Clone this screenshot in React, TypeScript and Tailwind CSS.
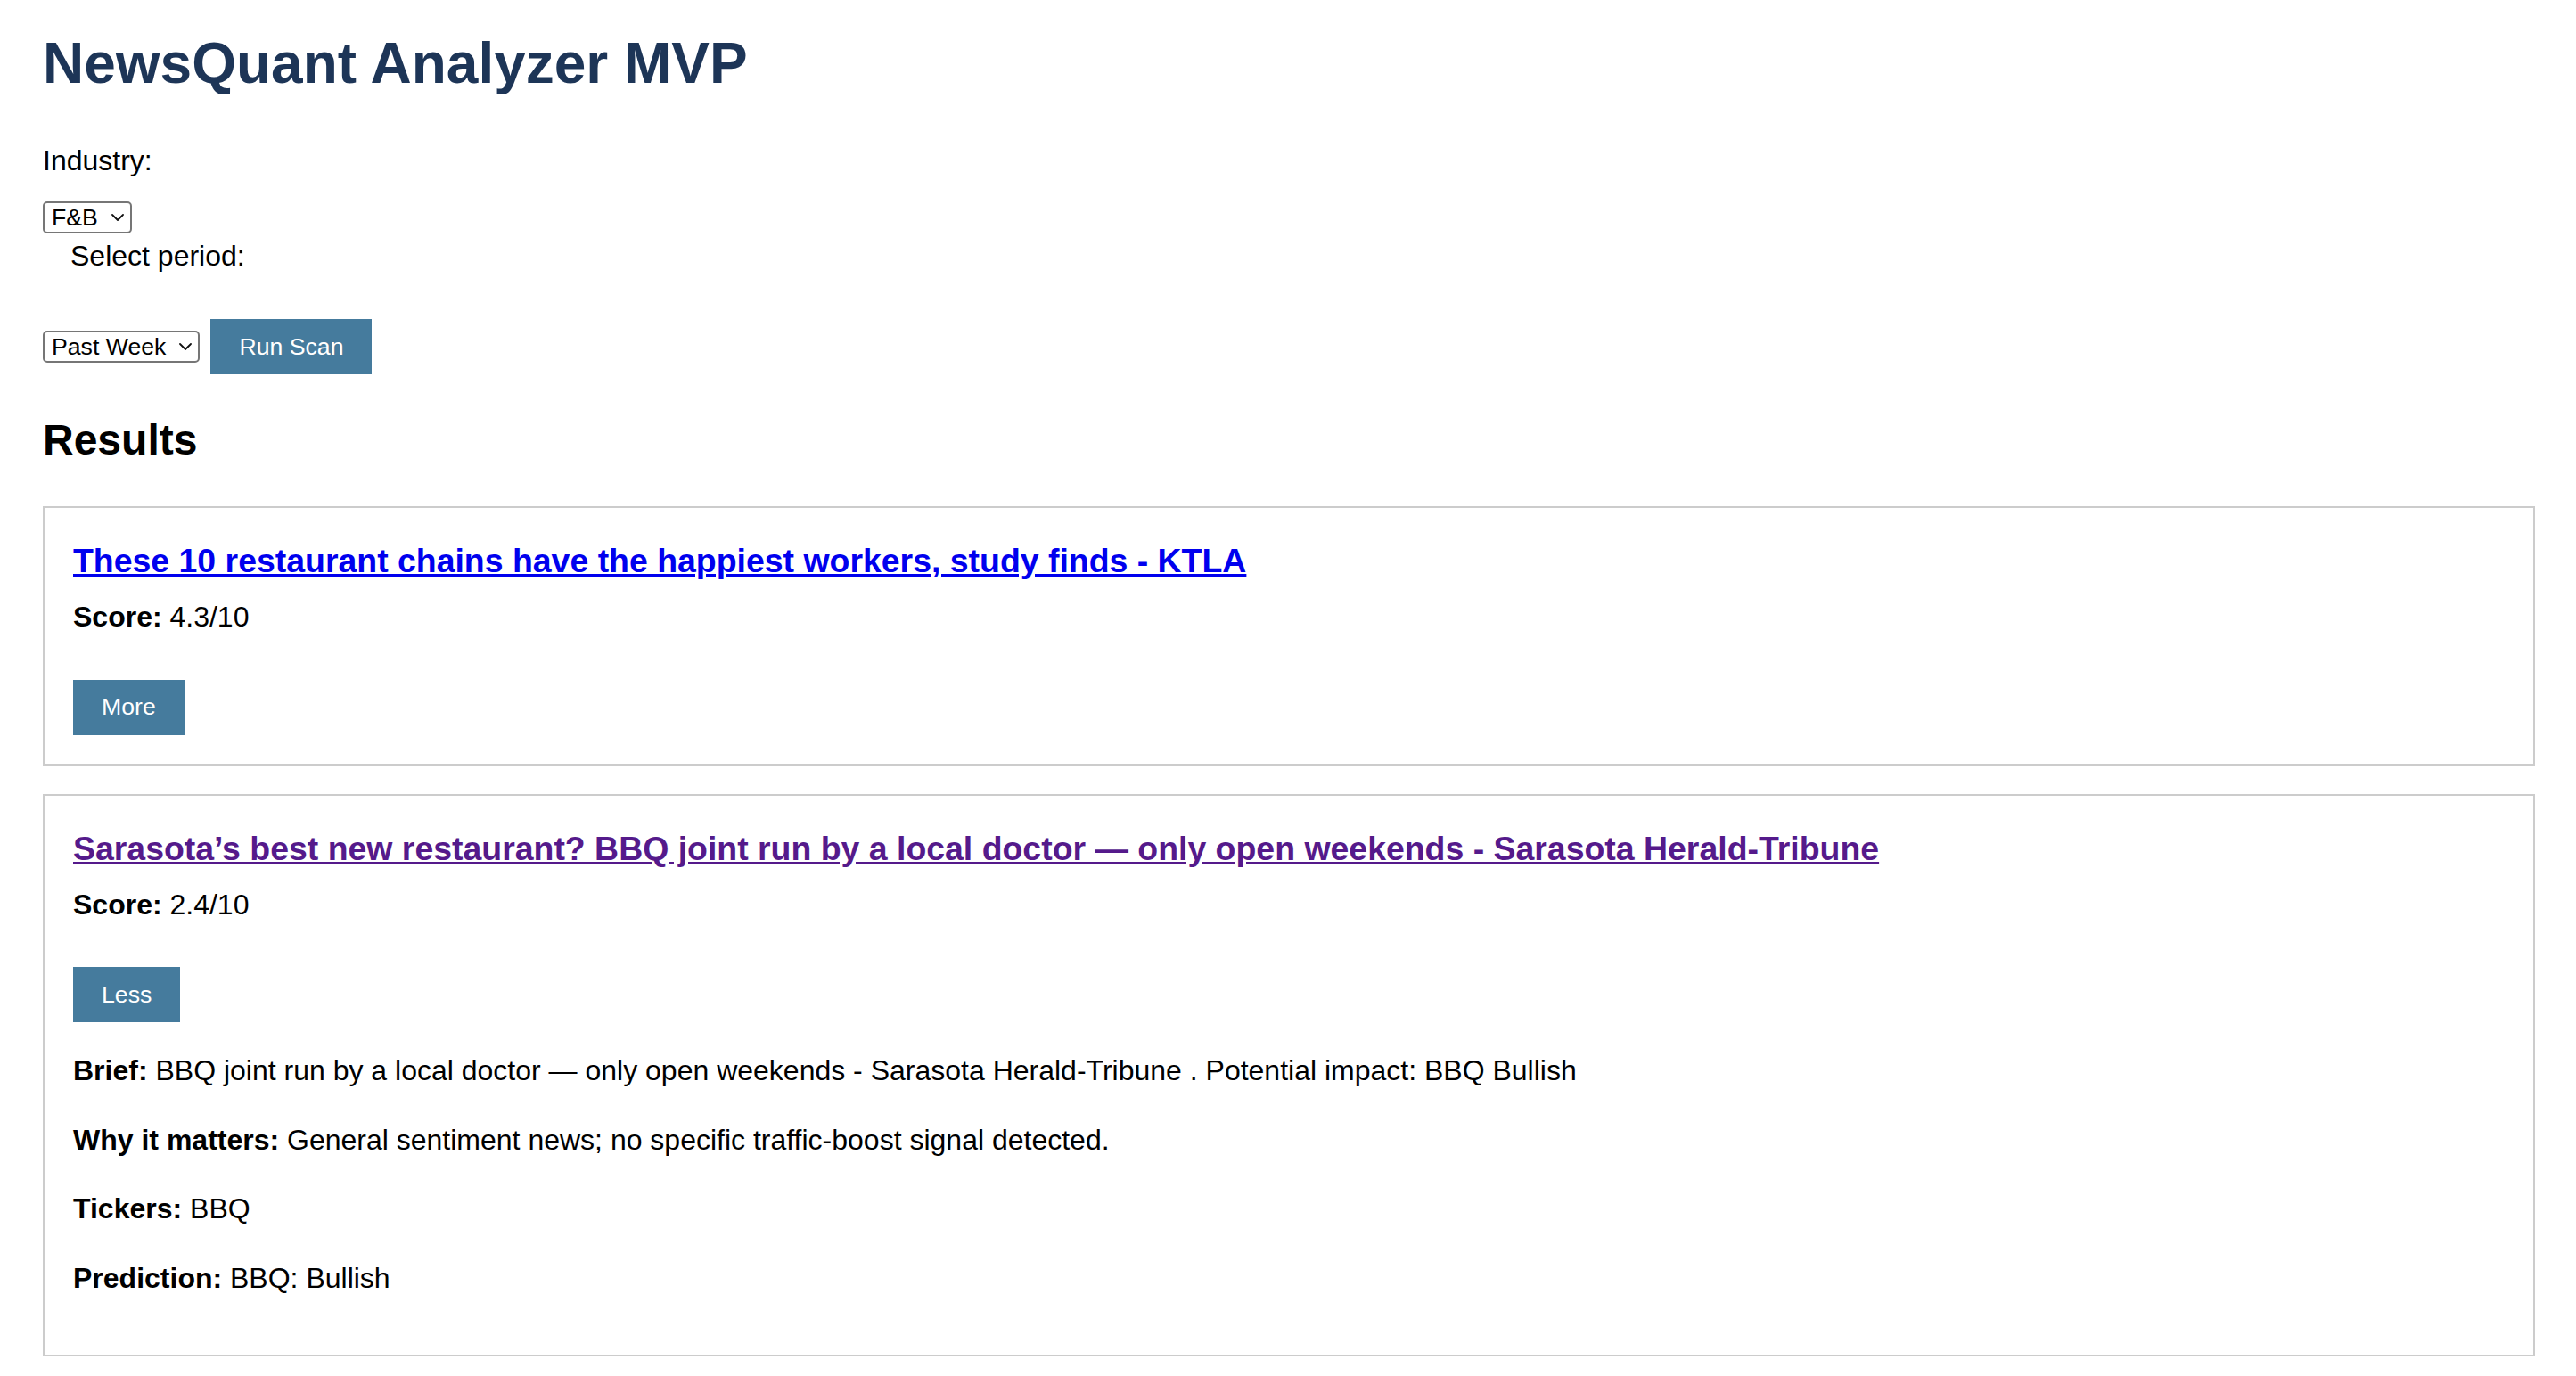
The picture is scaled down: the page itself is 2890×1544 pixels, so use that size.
import React, { useState } from "react";

function Chevron() {
  return (
    <svg width="14" height="8" viewBox="0 0 14 8" fill="none" className="shrink-0">
      <path d="M1 1 L7 7 L13 1" stroke="#111" strokeWidth="1.8" strokeLinecap="round" strokeLinejoin="round" />
    </svg>
  );
}

function FakeSelect({ label }: { label: string }) {
  return (
    <div className="inline-flex h-[36px] items-center gap-[15px] rounded-[5px] border-2 border-[#767676] bg-white pl-[8px] pr-[7px] text-[26.67px] leading-none text-black">
      <span>{label}</span>
      <Chevron />
    </div>
  );
}

function ActionButton({ children, onClick }: { children: React.ReactNode; onClick?: () => void }) {
  return (
    <button
      onClick={onClick}
      className="flex h-[62px] items-center bg-[#457b9d] px-[32px] text-[26.67px] leading-none text-white"
    >
      {children}
    </button>
  );
}

type Item = {
  title: string;
  score: string;
  visited: boolean;
  brief: string;
  why: string;
  tickers: string;
  prediction: string;
};

const items: Item[] = [
  {
    title: "These 10 restaurant chains have the happiest workers, study finds - KTLA",
    score: "4.3/10",
    visited: false,
    brief: "These 10 restaurant chains have the happiest workers, study finds - KTLA . Potential impact: Neutral",
    why: "General sentiment news; no specific traffic-boost signal detected.",
    tickers: "None",
    prediction: "None",
  },
  {
    title: "Sarasota\u2019s best new restaurant? BBQ joint run by a local doctor \u2014 only open weekends - Sarasota Herald-Tribune",
    score: "2.4/10",
    visited: true,
    brief: "BBQ joint run by a local doctor \u2014 only open weekends - Sarasota Herald-Tribune . Potential impact: BBQ Bullish",
    why: "General sentiment news; no specific traffic-boost signal detected.",
    tickers: "BBQ",
    prediction: "BBQ: Bullish",
  },
];

function Card({ item, initialOpen, className }: { item: Item; initialOpen: boolean; className: string }) {
  const [open, setOpen] = useState(initialOpen);
  return (
    <div className={className + " border-2 border-[#cccccc] px-[32px] py-[32px]"}>
      <h3 className="text-[37.44px] font-bold leading-[54px]">
        <a
          href="#"
          onClick={(e) => e.preventDefault()}
          className={item.visited ? "text-[#551a8b] underline" : "text-[#0000ee] underline"}
        >
          {item.title}
        </a>
      </h3>
      <p className="mt-[14px] text-[32px] leading-[44.5px]">
        <b>Score:</b> {item.score}
      </p>
      <div className="mt-[48px] flex">
        <ActionButton onClick={() => setOpen(!open)}>{open ? "Less" : "More"}</ActionButton>
      </div>
      {open && (
        <div>
          <p className="mt-[32px] text-[32px] leading-[45.7px]">
            <b>Brief:</b> {item.brief}
          </p>
          <p className="mt-[32px] text-[32px] leading-[45.7px]">
            <b>Why it matters:</b> {item.why}
          </p>
          <p className="mt-[32px] text-[32px] leading-[45.7px]">
            <b>Tickers:</b> {item.tickers}
          </p>
          <p className="mb-[30px] mt-[32px] text-[32px] leading-[45.7px]">
            <b>Prediction:</b> {item.prediction}
          </p>
        </div>
      )}
    </div>
  );
}

export default function App() {
  return (
    <div className="min-h-screen bg-white pb-[20px] pl-[48px] pr-[46px] pt-[39px] font-['Liberation_Sans',Arial,Helvetica,sans-serif] text-black">
      <h1 className="text-[64px] font-bold leading-[64px] text-[#1d3557]">NewsQuant Analyzer MVP</h1>
      <div className="mt-[55px] text-[32px] leading-[45px]">Industry:</div>
      <div className="mt-[23px] flex">
        <FakeSelect label="F&B" />
      </div>
      <div className="mt-[3px] pl-[31px] text-[32px] leading-[45px]">Select period:</div>
      <div className="mt-[48px] flex items-center gap-[12px]">
        <FakeSelect label="Past Week" />
        <ActionButton>Run Scan</ActionButton>
      </div>
      <h2 className="mt-[50px] text-[48px] font-bold leading-[48px]">Results</h2>
      <Card item={items[0]} initialOpen={false} className="mt-[50px]" />
      <Card item={items[1]} initialOpen={true} className="mt-[32px]" />
    </div>
  );
}
